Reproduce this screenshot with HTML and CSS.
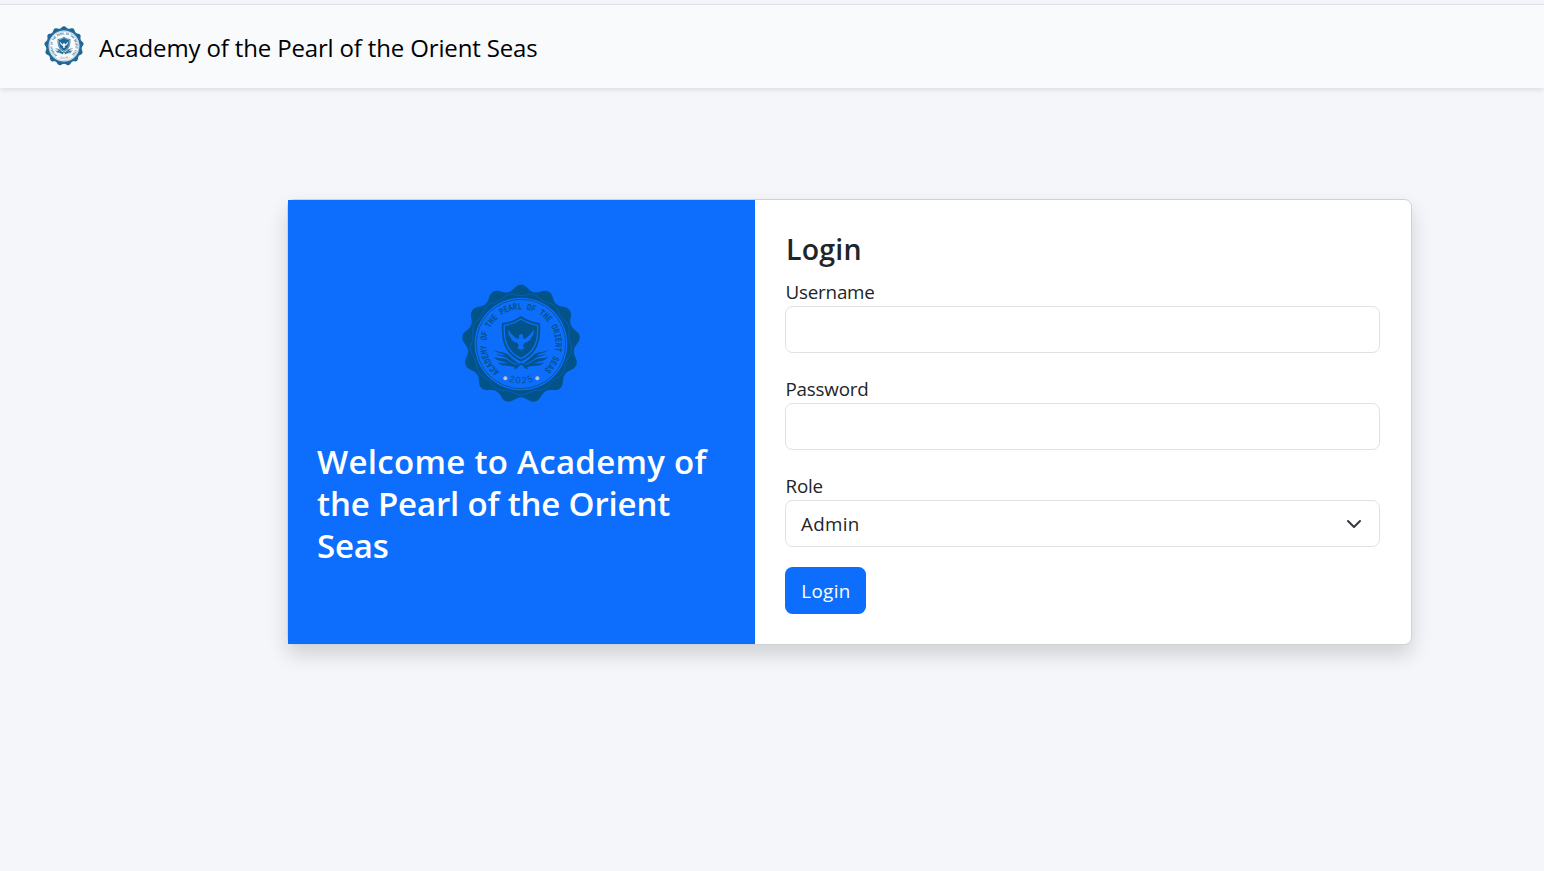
FILE: index.html
```html
<!DOCTYPE html>
<html lang="en">
<head>
<meta charset="utf-8">
<title>Academy of the Pearl of the Orient Seas</title>
<link rel="stylesheet" href="styles.css">
</head>
<body>
<svg class="defs" aria-hidden="true">
  <defs>
    <path id="lobe" d="M0 0L-38.3 -155.3C-20.8 -159.6 -18 -177.5 0 -177.5C18 -177.5 20.8 -159.6 38.3 -155.3Z"/>
    <path id="wave" d="M-36.6 -148.6C-22 -152.2 -16 -145 0 -145C16 -145 22 -152.2 36.6 -148.6"/>
    <path id="arc-top" d="M-64 82A104 104 0 1 1 64 82"/>
    <path id="arc-bottom" d="M-70 95A118 118 0 0 0 70 95"/>
    <path id="feathers" d="M-82 18C-66 26 -48 22 -37 34C-29 44 -16 51 -4 61C-20 60 -32 51 -40 44C-50 36 -68 36 -76 29C-66 33 -54 32 -46 35C-56 27 -72 28 -82 18ZM-81 38C-66 46 -48 39 -37 50C-29 57 -18 61 -6 65C-20 67 -32 62 -40 57C-52 51 -70 54 -81 38ZM-69 55C-56 62 -40 54 -29 60C-20 65 -10 62 0 56L0 63C-9 65 -12 78 -20 74C-19 70 -18 69 -22 68C-38 63 -58 71 -69 55Z"/>
    <symbol id="seal" viewBox="-180 -180 360 360">
      <g class="seal-ink">
        <use href="#lobe"/><use href="#lobe" transform="rotate(27.692)"/><use href="#lobe" transform="rotate(55.385)"/><use href="#lobe" transform="rotate(83.077)"/><use href="#lobe" transform="rotate(110.769)"/><use href="#lobe" transform="rotate(138.462)"/><use href="#lobe" transform="rotate(166.154)"/><use href="#lobe" transform="rotate(193.846)"/><use href="#lobe" transform="rotate(221.538)"/><use href="#lobe" transform="rotate(249.231)"/><use href="#lobe" transform="rotate(276.923)"/><use href="#lobe" transform="rotate(304.615)"/><use href="#lobe" transform="rotate(332.308)"/>
        <circle r="157"/>
      </g>
      <g class="seal-wave">
        <use href="#wave"/><use href="#wave" transform="rotate(27.692)"/><use href="#wave" transform="rotate(55.385)"/><use href="#wave" transform="rotate(83.077)"/><use href="#wave" transform="rotate(110.769)"/><use href="#wave" transform="rotate(138.462)"/><use href="#wave" transform="rotate(166.154)"/><use href="#wave" transform="rotate(193.846)"/><use href="#wave" transform="rotate(221.538)"/><use href="#wave" transform="rotate(249.231)"/><use href="#wave" transform="rotate(276.923)"/><use href="#wave" transform="rotate(304.615)"/><use href="#wave" transform="rotate(332.308)"/>
      </g>
      <circle class="seal-paper" r="139"/>
      <circle class="seal-ring" r="134"/>
      <g class="seal-text">
        <text font-size="29"><textPath href="#arc-top" textLength="508" lengthAdjust="spacingAndGlyphs">ACADEMY OF THE PEARL OF THE ORIENT SEAS</textPath></text>
        <text font-size="28" class="seal-year" text-anchor="middle"><textPath href="#arc-bottom" startOffset="50%" textLength="74">2025</textPath></text>
      </g>
      <circle class="seal-dot" cx="-47" cy="103" r="6"/>
      <circle class="seal-dot" cx="49" cy="103" r="6"/>
      <path class="seal-ink" d="M0 -84C-18 -71 -36 -65 -57 -63C-60 -8 -50 30 0 53C50 30 60 -8 57 -63C36 -65 18 -71 0 -84Z"/>
      <path class="seal-line" d="M0 -75C-16 -64 -32 -59 -50 -56C-52 -10 -43 23 0 44C43 23 52 -10 50 -56C32 -59 16 -64 0 -75Z"/>
      <path class="seal-paper" d="M0 -30C4 -31 7 -27 6 -22L8 -14C20 -19 29 -30 39 -43C39 -31 35 -22 28 -16L29 -11L21 -9L20 -5L13 -5C9 0 7 3 5 6L13 13L7 12L8 17L3 14L0 21L-3 14L-8 17L-7 12L-13 13L-6 6C-8 3 -10 0 -13 -5L-20 -5L-21 -9L-29 -11L-28 -16C-35 -22 -39 -31 -39 -43C-29 -30 -20 -19 -8 -14L-5 -22L-8 -25Z"/>
      <use class="seal-ink" href="#feathers"/>
      <use class="seal-ink" href="#feathers" transform="scale(-1 1)"/>
    </symbol>
  </defs>
</svg>
<header class="navbar">
  <a class="brand">
    <svg class="brand-seal"><use href="#seal"/></svg>
    <span class="brand-name">Academy of the Pearl of the Orient Seas</span>
  </a>
</header>
<main class="page">
  <section class="card">
    <div class="welcome">
      <svg class="welcome-seal"><use href="#seal"/></svg>
      <h1 class="welcome-title"><span class="loose">Welcome to Academy of</span><br>the Pearl of the Orient<br>Seas</h1>
    </div>
    <form class="form">
      <h2 class="form-title">Login</h2>
      <div class="field"><label class="label" for="u">Username</label><input class="control" id="u" type="text"></div>
      <div class="field"><label class="label" for="p">Password</label><input class="control" id="p" type="password"></div>
      <div class="field">
        <span class="label">Role</span>
        <div class="control select"><span>Admin</span>
          <svg class="chevron" viewBox="0 0 16 16"><path d="m2 5 6 6 6-6"/></svg>
        </div>
      </div>
      <button class="button" type="button">Login</button>
    </form>
  </section>
</main>
</body>
</html>
```
FILE: styles.css
```css
* { box-sizing: border-box; }
body {
  margin: 0;
  min-height: 871px;
  background: #f4f6fa;
  color: #212529;
  font-family: "Open Sans", "Noto Sans", sans-serif;
  font-size: 18.8px;
  line-height: 30px;
  overflow: hidden;
}
.defs { position: absolute; width: 0; height: 0; }
.navbar {
  margin-top: 4px;
  height: 84px;
  padding: 22px 44px;
  border-top: 1px solid #dee0ec;
  background: #f8fafc;
  box-shadow: 0 2px 5px rgba(0, 0, 0, .1);
}
.brand { display: flex; gap: 15px; color: #000; }
.brand-seal {
  width: 40px; height: 40px; flex: none; margin-top: -1px;
  --ink: #1c6795; --paper: #f8fafc; --wave: .25; --dot: #d5dde3;
}
.brand-name { font-size: 24px; line-height: 42px; letter-spacing: -.15px; white-space: nowrap; }
.page { padding: 111px 0 0 287px; }
.card {
  display: flex;
  width: 1125px;
  height: 446px;
  border: 1px solid #d0d1d3;
  border-radius: 7.5px;
  background: #fff;
  box-shadow: 0 10px 20px rgba(0, 0, 0, .15);
}
.welcome {
  width: 467px;
  padding: 84px 30px 0 29px;
  background: #0d6efd;
  color: #fff;
  --ink: #025389; --paper: #0d6efd; --wave: .55; --dot: #c5c0bd;
}
.welcome-seal { display: block; width: 120px; height: 120px; margin: 0 auto 37px; }
.welcome-title { margin: 0; font-size: 33px; font-weight: 600; line-height: 42px; white-space: nowrap; letter-spacing: -.16px; }
.loose { letter-spacing: .3px; }
.seal-ink { fill: var(--ink); }
.seal-paper { fill: var(--paper); }
.seal-wave { fill: none; stroke: var(--paper); stroke-width: 2; stroke-opacity: var(--wave); }
.seal-ring { fill: none; stroke: var(--ink); stroke-width: 2.5; }
.seal-line { fill: none; stroke: var(--paper); stroke-width: 4; }
.seal-text { fill: var(--ink); font-family: "Liberation Mono", monospace; font-weight: 700; }
.seal-year { font-family: "Liberation Sans", sans-serif; font-weight: 400; }
.seal-dot { fill: var(--dot); }
.form { flex: 1; padding: 30px 31px 30px 30px; }
.form-title { margin: 0 0 10px; padding: 1px 0 0 1px; height: 36px; font-size: 28.5px; font-weight: 600; line-height: 36px; letter-spacing: .2px; }
.field { margin-bottom: 20px; }
.label { display: block; height: 30px; padding: 1px 0 0 .5px; letter-spacing: -.2px; }
.control {
  display: block;
  width: 100%;
  height: 47px;
  padding: 8px 15px;
  border: 1px solid #dee2e6;
  border-radius: 7.5px;
  background: #fff;
  font: inherit;
}
.select { display: flex; justify-content: space-between; align-items: center; padding-right: 17px; letter-spacing: .3px; }
.chevron { width: 16px; height: 16px; fill: none; stroke: #343a40; stroke-width: 2; stroke-linecap: round; stroke-linejoin: round; }
.button {
  display: block;
  height: 47px;
  width: 81px;
  padding: 1px 0 0 1px;
  border: 0;
  border-radius: 7.5px;
  background: #0d6efd;
  color: #fff;
  font: inherit;
  letter-spacing: .4px;
}
```
